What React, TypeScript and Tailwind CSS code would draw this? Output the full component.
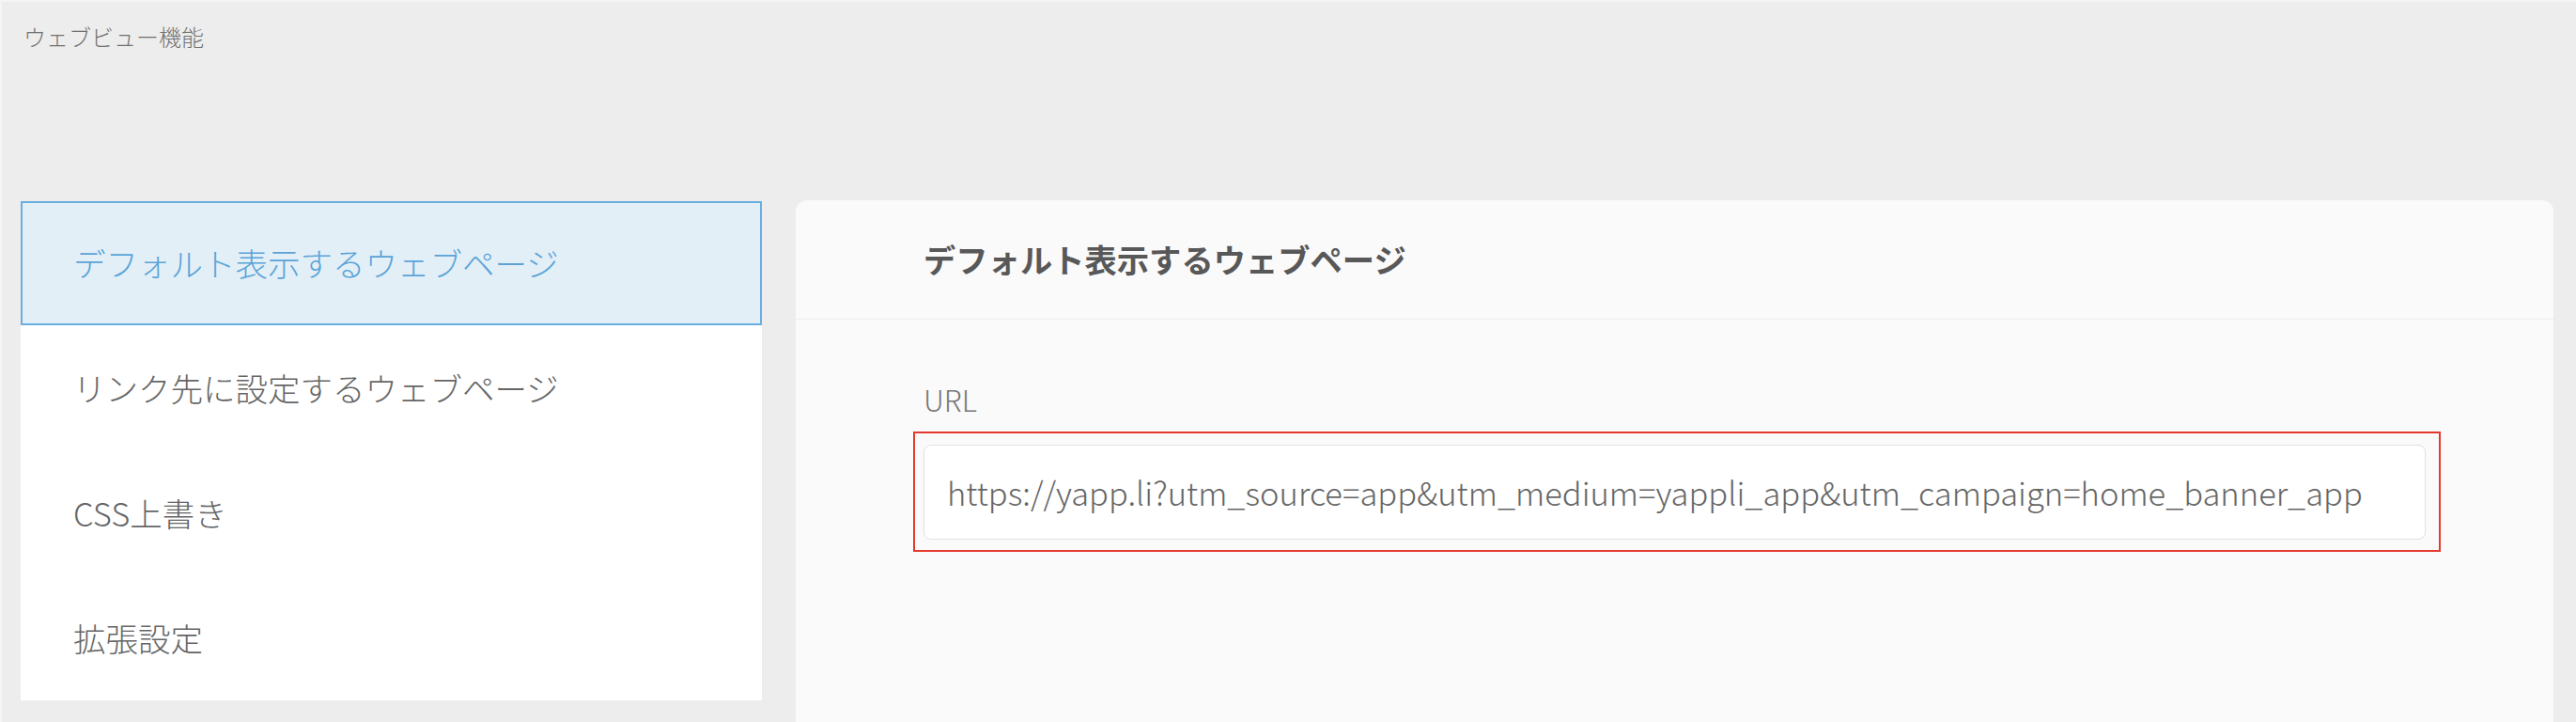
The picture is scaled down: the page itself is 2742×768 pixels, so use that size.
import React from "react";

const menuItems = [
  "デフォルト表示するウェブページ",
  "リンク先に設定するウェブページ",
  "CSS上書き",
  "拡張設定",
];

export default function App() {
  const active = 0;
  const url =
    "https://yapp.li?utm_source=app&utm_medium=yappli_app&utm_campaign=home_banner_app";

  return (
    <div
      className="w-[2742px] h-[768px] overflow-hidden bg-[#ededed] border-l-2 border-t-2 border-[#f5f5f5]"
      style={{ fontFamily: '"Noto Sans CJK JP", "Noto Sans", sans-serif' }}
    >
      <div className="pl-[23px] pt-[21px] text-[24px] leading-[32px] font-light text-[#707070]">
        ウェブビュー機能
      </div>

      <div className="mt-[158px] flex items-start pl-[20px] pr-[24px] gap-[36px]">
        {/* side menu */}
        <div className="w-[789px] mt-[1px] bg-white flex flex-col">
          {menuItems.map((label, i) =>
            i === active ? (
              <div
                key={label}
                className="h-[132px] flex items-center pl-[54px] border-2 border-[#6aaddf] bg-[#e3eff7] text-[34.5px] font-light text-[#5ba4d8]"
              >
                {label}
              </div>
            ) : (
              <div
                key={label}
                className="h-[133px] flex items-center pl-[56px] text-[34.5px] font-light text-[#666]"
              >
                {label}
              </div>
            )
          )}
        </div>

        {/* main panel */}
        <div className="flex-1 h-[620px] bg-[#fafafa] rounded-t-[12px]">
          <div className="h-[127px] flex items-center px-[136px] border-b border-[#eeeeee] text-[34.3px] font-bold text-[#585858]">
            デフォルト表示するウェブページ
          </div>
          <div className="px-[136px]">
            <div className="mt-[65px] text-[31px] leading-[40px] font-light text-[#777]">URL</div>
            <div className="mt-[14px] -ml-[11px] -mr-[16px] border-2 border-[#e5392d] pl-[9px] pr-[14px] pt-[12px] pb-[11px]">
              <div className="h-[101px] flex items-center rounded-[8px] border border-[#e1e1e7] bg-white px-[24px] text-[34.5px] font-light text-[#666] whitespace-nowrap overflow-hidden">
                {url}
              </div>
            </div>
          </div>
        </div>
      </div>
    </div>
  );
}
